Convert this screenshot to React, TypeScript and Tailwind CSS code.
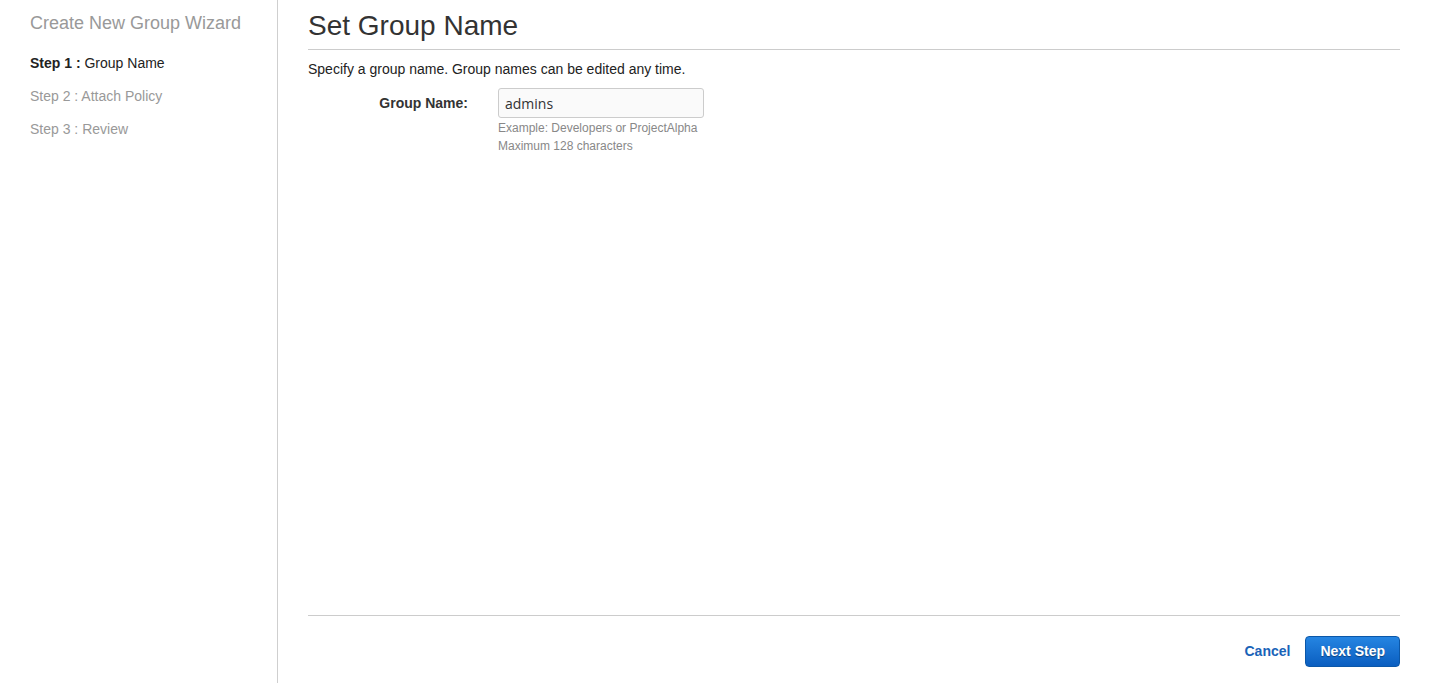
export default function App() {
  return (
    <div className="flex h-[683px] w-full bg-white font-['Liberation_Sans',Arial,sans-serif] text-[#333]">
      <aside className="w-[278px] shrink-0 border-r border-[#cfcfcf] pl-[30px] pt-[12px]">
        <h2 className="text-[18px] leading-[22px] text-[#999]">Create New Group Wizard</h2>
        <ul className="mt-[20px] space-y-[15px] text-[14px] leading-[18px]">
          <li className="text-[#222]">
            <span className="font-bold">Step 1 :</span> Group Name
          </li>
          <li className="text-[#999]">Step 2 : Attach Policy</li>
          <li className="text-[#999]">Step 3 : Review</li>
        </ul>
      </aside>

      <main className="flex flex-1 flex-col pl-[30px] pr-[30px]">
        <header className="border-b border-[#ccc] pt-[10px] pb-[7px]">
          <h1 className="text-[28px] leading-[32px] text-[#333]">Set Group Name</h1>
        </header>

        <p className="mt-[11px] text-[14px] leading-[16px] text-[#222]">
          Specify a group name. Group names can be edited any time.
        </p>

        <div className="mt-[11px] flex items-start">
          <label className="w-[160px] pt-[7px] text-right text-[14px] font-bold leading-[16px] text-[#333]">
            Group Name:
          </label>
          <div className="ml-[30px]">
            <input
              defaultValue="admins"
              className="h-[30px] w-[206px] rounded-[3px] border border-[#ccc] bg-[#fafafa] px-[6px] font-['Open_Sans',sans-serif] text-[14px] text-[#333] outline-none"
            />
            <div className="mt-[1px] text-[12px] leading-[18px] text-[#888]">
              <div>Example: Developers or ProjectAlpha</div>
              <div>Maximum 128 characters</div>
            </div>
          </div>
        </div>

        <div className="flex-1" />

        <footer className="flex items-center justify-end gap-[15px] border-t border-[#ccc] pt-[20px] pb-[16px]">
          <button className="text-[14px] font-bold text-[#1a63b8]">Cancel</button>
          <button className="h-[31px] rounded-[4px] border border-[#0b57a8] bg-gradient-to-b from-[#2585e2] to-[#0a5ec0] px-[14px] text-[14px] font-bold text-white [text-shadow:0_1px_1px_rgba(0,0,0,0.4)]">
            Next Step
          </button>
        </footer>
      </main>
    </div>
  )
}
